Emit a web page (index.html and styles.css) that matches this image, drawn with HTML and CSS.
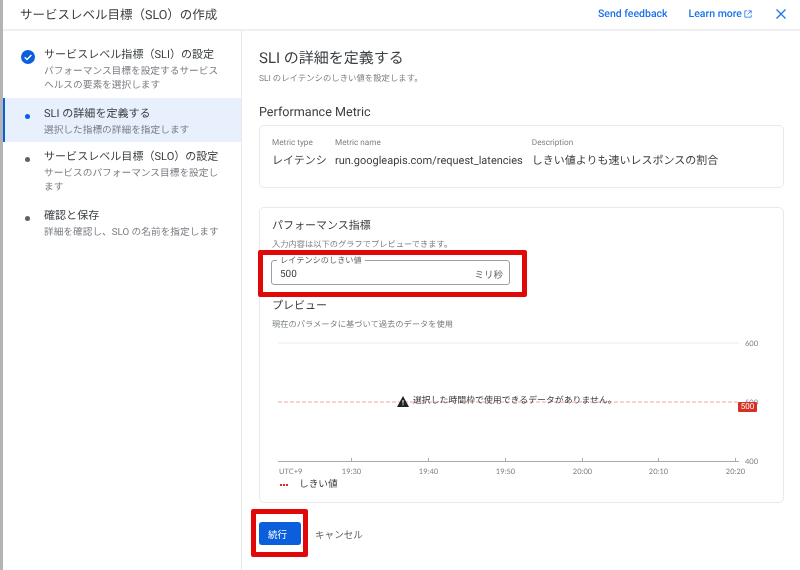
FILE: index.html
```html
<!DOCTYPE html>
<html lang="ja">
<head>
<meta charset="utf-8">
<title>SLO</title>
<link rel="stylesheet" href="styles.css">
</head>
<body>
<div class="app">
  <header class="top">
    <h1 class="top-title">サービスレベル目標（SLO）の作成</h1>
    <div class="top-actions">
      <a class="link link-feedback">Send feedback</a>
      <a class="link link-learn">Learn more
        <svg class="ext" viewBox="0 0 10 10" width="8" height="8"><path d="M4 1H1v8h8V6M5.500 1H9v3.500M9 1L4.500 5.500" fill="none" stroke="#1a73e8" stroke-width="1"/></svg>
      </a>
      <svg class="close" viewBox="0 0 10 10" width="10" height="10"><path d="M.5.500l9 9M9.500.500l-9 9" fill="none" stroke="#1a73e8" stroke-width="1.300"/></svg>
    </div>
  </header>
  <div class="body">
    <nav class="side">
      <div class="step step-first">
        <div class="mark"><svg viewBox="0 0 14 14" width="14" height="14"><circle cx="7" cy="7" r="7" fill="#0b5fdc"/><path d="M3.700 7.200l2.300 2.300 4.400-4.600" fill="none" stroke="#fff" stroke-width="1.400"/></svg></div>
        <div class="step-text">
          <div class="step-title">サービスレベル指標（SLI）の設定</div>
          <div class="step-sub">パフォーマンス目標を設定するサービスヘルスの要素を選択します</div>
        </div>
      </div>
      <div class="step step-active">
        <div class="mark"><span class="dot dot-blue"></span></div>
        <div class="step-text">
          <div class="step-title">SLI の詳細を定義する</div>
          <div class="step-sub">選択した指標の詳細を指定します</div>
        </div>
      </div>
      <div class="step">
        <div class="mark"><span class="dot"></span></div>
        <div class="step-text">
          <div class="step-title">サービスレベル目標（SLO）の設定</div>
          <div class="step-sub">サービスのパフォーマンス目標を設定します</div>
        </div>
      </div>
      <div class="step">
        <div class="mark"><span class="dot"></span></div>
        <div class="step-text">
          <div class="step-title">確認と保存</div>
          <div class="step-sub">詳細を確認し、SLO の名前を指定します</div>
        </div>
      </div>
    </nav>
    <main class="main">
      <h2 class="page-title">SLI の詳細を定義する</h2>
      <p class="page-sub">SLI のレイテンシのしきい値を設定します。</p>
      <h3 class="section-title">Performance Metric</h3>
      <section class="card card-metric">
        <div class="metric metric-type"><div class="metric-label">Metric type</div><div class="metric-value">レイテンシ</div></div>
        <div class="metric metric-name"><div class="metric-label">Metric name</div><div class="metric-value">run.googleapis.com/request_latencies</div></div>
        <div class="metric"><div class="metric-label">Description</div><div class="metric-value">しきい値よりも速いレスポンスの割合</div></div>
      </section>
      <section class="card card-perf">
        <h4 class="card-title">パフォーマンス指標</h4>
        <p class="card-sub">入力内容は以下のグラフでプレビューできます。</p>
        <div class="field">
          <span class="field-label">レイテンシのしきい値</span>
          <span class="field-value">500</span>
          <span class="field-unit">ミリ秒</span>
        </div>
        <h4 class="card-title preview-title">プレビュー</h4>
        <p class="card-sub preview-sub">現在のパラメータに基づいて過去のデータを使用</p>
        <div class="chart">
          <svg class="chart-svg" viewBox="0 0 500 142" width="500" height="142">
            <line x1="6" y1="8" x2="467" y2="8" stroke="#ececec"/>
            <line x1="6" y1="67" x2="467" y2="67" stroke="#f3a6a0" stroke-dasharray="4 2"/>
            <line x1="6" y1="126.500" x2="467" y2="126.500" stroke="#a8abae" stroke-width="1"/>
            <g stroke="#a8abae">
              <line x1="79.500" y1="123" x2="79.500" y2="127"/><line x1="156.500" y1="123" x2="156.500" y2="127"/>
              <line x1="233.500" y1="123" x2="233.500" y2="127"/><line x1="310.500" y1="123" x2="310.500" y2="127"/>
              <line x1="386.500" y1="123" x2="386.500" y2="127"/><line x1="463.500" y1="123" x2="463.500" y2="127"/>
            </g>
            <g class="axis">
              <text x="473" y="11">600</text><text x="473" y="70">500</text><text x="473" y="129">400</text>
              <text x="7" y="138.500">UTC+9</text>
              <text x="79.500" y="138.500" text-anchor="middle">19:30</text><text x="156.500" y="138.500" text-anchor="middle">19:40</text>
              <text x="233.500" y="138.500" text-anchor="middle">19:50</text><text x="310.500" y="138.500" text-anchor="middle">20:00</text>
              <text x="386.500" y="138.500" text-anchor="middle">20:10</text><text x="463.500" y="138.500" text-anchor="middle">20:20</text>
            </g>
          </svg>
          <div class="nodata">
            <svg viewBox="0 0 12 11" width="12" height="11"><path d="M6 0l6 11H0z" fill="#202124"/><path d="M5.500 4h1v3.500h-1zM5.500 8.300h1v1h-1z" fill="#fff"/></svg>
            <span>選択した時間枠で使用できるデータがありません。</span>
          </div>
          <span class="badge">500</span>
        </div>
        <div class="legend"><span class="legend-mark"></span><span>しきい値</span></div>
      </section>
      <div class="actions">
        <button class="btn-primary">続行</button>
        <button class="btn-text">キャンセル</button>
      </div>
    </main>
  </div>
  <div class="redbox redbox-field"></div>
  <div class="redbox redbox-btn"></div>
</div>
</body>
</html>
```
FILE: styles.css
```css
* { box-sizing: border-box; }
html, body { margin: 0; padding: 0; }
body { font-family: Roboto, "Noto Sans CJK JP", sans-serif; background: #fff; color: #3c4043; text-rendering: geometricPrecision; }
.app { position: relative; width: 800px; height: 570px; overflow: hidden; border-left: 3px solid #b4b4b4; background: #fff; display: flex; flex-direction: column; filter: blur(.35px); }
.top { height: 31px; flex: none; display: flex; align-items: center; justify-content: space-between; padding: 0 14px 2px 17px; border-bottom: 2px solid #eeeff0; }
.top-title { margin: 0; font-size: 12.500px; font-weight: 400; color: #3c4043; }
.top-actions { display: flex; align-items: center; }
.link { color: #1a73e8; font-size: 10.500px; font-weight: 500; display: flex; align-items: center; gap: 2px; }
.link-feedback { margin-right: 21px; }
.link-learn { margin-right: 24px; }
.ext { display: block; }
.close { display: block; }
.body { flex: 1; display: flex; min-height: 0; }
.side { width: 239px; flex: none; border-right: 1px solid #e8e9ea; padding-top: 16px; }
.step { display: flex; padding: 0 19px 0 0; margin-bottom: 13.500px; }
.step-first { margin-bottom: 10.500px; }
.step-active { background: #e8f0fe; border-left: 2px solid #0b5fdc; padding-top: 8px; padding-bottom: 4.500px; margin-bottom: 7px; margin-top: -5px; }
.mark { width: 41px; flex: none; display: flex; justify-content: center; padding-left: 8px; padding-top: 2px; height: 18px; align-items: center; }
.step-active .mark { width: 39px; padding-left: 6px; }
.dot { width: 5px; height: 5px; border-radius: 50%; background: #5f6368; display: block; }
.dot-blue { background: #0b5fdc; }
.step-text { flex: 1; min-width: 0; }
.step-title { font-size: 11.050px; line-height: 16px; color: #3c4043; white-space: nowrap; }
.step-sub { font-size: 9.700px; line-height: 14px; color: #7a7e83; margin-top: 1.500px; }
.main { flex: 1; min-width: 0; padding: 17px 16px 0 17px; }
.page-title { margin: 0; font-size: 15px; line-height: 20px; font-weight: 400; color: #3c4043; }
.page-sub { margin: 5px 0 0; font-size: 8.400px; line-height: 12px; color: #7d8185; }
.section-title { margin: 20px 0 0; font-size: 12.600px; line-height: 16px; font-weight: 400; color: #3c4043; }
.card { border: 1px solid #e8e9ea; border-radius: 5px; }
.card-metric { margin-top: 4px; height: 63px; padding: 11px 12px 0; display: flex; gap: 9px; }
.metric-label { font-size: 8.200px; line-height: 12px; color: #7d8185; }
.metric-value { font-size: 11px; line-height: 16px; margin-top: 4px; color: #3c4043; white-space: nowrap; }
.metric-type { width: 54px; }
.card-perf { margin-top: 19px; height: 296px; padding: 10px 12px 0; }
.card-title { margin: 0; font-size: 11px; line-height: 16px; font-weight: 400; color: #3c4043; }
.card-sub { margin: 5px 0 0; font-size: 8.250px; line-height: 12px; color: #7d8185; }
.field { position: relative; margin: 9px 0 0 -1px; width: 239px; height: 25px; border: 1px solid #9aa0a6; border-radius: 3px; display: flex; align-items: center; justify-content: space-between; padding: 3px 6px 0 8px; }
.field-label { position: absolute; left: 5px; top: -5px; padding: 0 3px; background: #fff; font-size: 8.200px; line-height: 10px; color: #5f6368; }
.field-value { font-size: 10px; color: #3c4043; }
.field-unit { font-size: 9.500px; color: #5f6368; }
.preview-title { margin-top: 13px; }
.preview-sub { margin-top: 5px; }
.chart { position: relative; width: 500px; height: 142px; margin-top: 4px; }
.chart-svg { display: block; }
.axis { font-family: Lato, "Noto Sans", sans-serif; font-size: 7.500px; fill: #7d8185; }
.nodata { position: absolute; left: 125px; top: 59px; display: flex; align-items: center; gap: 4px; font-size: 8.900px; line-height: 14px; color: #3c4043; white-space: nowrap; }
.nodata svg { display: block; }
.badge { position: absolute; left: 466px; top: 67px; width: 19px; height: 10px; background: #d93025; border-radius: 1px; color: #fff; font-size: 8px; line-height: 10px; text-align: center; }
.legend { display: flex; align-items: center; font-size: 9.700px; line-height: 14px; color: #3c4043; margin-top: 1px; padding-left: 8px; }
.legend-mark { width: 8px; height: 1.500px; background: repeating-linear-gradient(90deg, #d93025 0 2px, transparent 2px 3px); margin-right: 11px; }
.actions { display: flex; align-items: center; margin-top: 19px; }
.btn-primary { width: 42px; height: 23px; border: 0; border-radius: 3px; background: #0b5fdc; color: #fff; font: inherit; font-size: 9.500px; padding: 0 5px 0 0; }
.btn-text { border: 0; background: none; font: inherit; font-size: 9.600px; color: #5f6368; padding: 0; margin-left: 14px; }
.redbox { position: absolute; border: 5px solid #e00808; border-radius: 2px; }
.redbox-field { left: 255px; top: 250px; width: 269px; height: 47px; }
.redbox-btn { left: 248px; top: 509px; width: 57px; height: 48px; }
```
